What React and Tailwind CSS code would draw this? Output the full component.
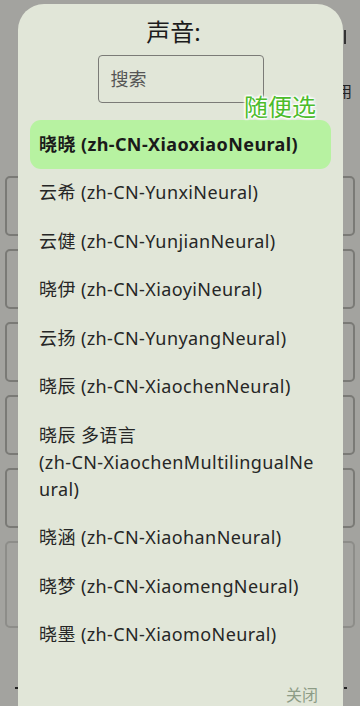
import React from "react";

const VOICES = [
  ["晓晓 (zh-CN-XiaoxiaoNeural)"],
  ["云希 (zh-CN-YunxiNeural)"],
  ["云健 (zh-CN-YunjianNeural)"],
  ["晓伊 (zh-CN-XiaoyiNeural)"],
  ["云扬 (zh-CN-YunyangNeural)"],
  ["晓辰 (zh-CN-XiaochenNeural)"],
  ["晓辰 多语言", "(zh-CN-XiaochenMultilingualNe", "ural)"],
  ["晓涵 (zh-CN-XiaohanNeural)"],
  ["晓梦 (zh-CN-XiaomengNeural)"],
  ["晓墨 (zh-CN-XiaomoNeural)"],
];

const FONT = {
  fontFamily: '"Noto Sans", "Noto Sans CJK SC", sans-serif',
};

function BackgroundPage() {
  return (
    <div className="relative h-[706px] w-[360px] overflow-hidden bg-[#a3a39f]">
      <div className="absolute right-[8px] top-[84px] text-[15px] leading-none text-[#222]">用</div>
      <div className="absolute right-[14px] top-[30px] h-[14px] w-[2px] bg-[#333]" />
      <div className="flex flex-col gap-[13px] px-[5px] pt-[176px]">
        {[60, 60, 60, 60, 60, 87].map((h, i) => (
          <div
            key={i}
            className={`rounded-[5px] border-2 ${i === 5 ? "border-[#8d8d89]" : "border-[#7a7a76]"}`}
            style={{ height: h }}
          />
        ))}
      </div>
      <div className="absolute left-[15px] top-[687px] h-[2px] w-[3px] bg-[#222]" />
      <div className="absolute right-[13px] top-[687px] h-[2px] w-[3px] bg-[#222]" />
    </div>
  );
}

export default function App() {
  return (
    <div className="relative h-[706px] w-[360px] overflow-hidden" style={FONT}>
      <BackgroundPage />

      <div className="absolute left-[18px] top-[4px] h-[740px] w-[325px] rounded-t-[26px] bg-[#e1e6d8]">
        <div className="flex flex-col items-center">
          <h2 className="pr-[14px] pt-[13px] text-[24px] leading-[30px] text-[#1c1c1c]">声音:</h2>
          <div className="mt-[8px] flex h-[48px] w-[166px] items-center rounded-[4px] border border-[#7b7b77] px-[12px] text-[18px] text-[#555]">
            搜索
          </div>
        </div>

        <div className="mt-[17px] flex flex-col px-[12px]">
          {VOICES.map((lines, i) => (
            <div
              key={lines[0]}
              className={`whitespace-nowrap px-[9px] py-[10.75px] text-[18px] leading-[27px] tracking-[0.4px] ${
                i === 0
                  ? "rounded-[11px] bg-[#b7f2a1] font-bold text-[#1a1a1a]"
                  : "text-[#262626]"
              }`}
            >
              {lines.map((line, j) => (
                <div key={j}>{line}</div>
              ))}
            </div>
          ))}
        </div>

        <div className="mt-[25px] flex justify-end pr-[25px]">
          <span className="text-[16px] leading-[22px] text-[#8d9c86]">关闭</span>
        </div>
      </div>

      <div
        className="absolute left-[244px] top-[91px] text-[24px] leading-[32px] text-[#4cbc2b]"
        style={{
          textShadow:
            "0 0 2px #fff, 0 0 3px #fff, 1px 1px 2px #fff, -1px -1px 2px #fff, 1px -1px 2px #fff, -1px 1px 2px #fff",
        }}
      >
        随便选
      </div>
    </div>
  );
}
